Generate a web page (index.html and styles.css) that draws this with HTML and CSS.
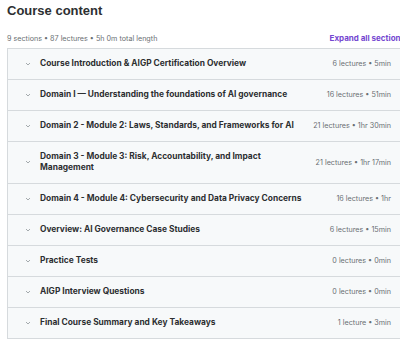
FILE: index.html
```html
<!DOCTYPE html>
<html lang="en">
<head>
    <meta charset="UTF-8">
    <meta name="viewport" content="width=device-width, initial-scale=1.0">
    <title>Course content</title>
    <link rel="stylesheet" href="styles.css">
</head>
<body>
    <div class="container">
        <h1>Course content</h1>
        <div class="summary">
            <span>9 sections • 87 lectures • 5h 0m total length</span>
            <button class="expand-btn">Expand all sections</button>
        </div>
        <div class="sections">
            <div class="section">
                <svg class="chevron" viewBox="0 0 6 4"><polyline points="1,1 3,3 5,1"/></svg>
                <span class="section-title">Course Introduction &amp; AIGP Certification Overview</span>
                <span class="section-meta">6 lectures • 5min</span>
            </div>
            <div class="section">
                <svg class="chevron" viewBox="0 0 6 4"><polyline points="1,1 3,3 5,1"/></svg>
                <span class="section-title">Domain I — Understanding the foundations of AI governance</span>
                <span class="section-meta">16 lectures • 51min</span>
            </div>
            <div class="section">
                <svg class="chevron" viewBox="0 0 6 4"><polyline points="1,1 3,3 5,1"/></svg>
                <span class="section-title">Domain 2 - Module 2: Laws, Standards, and Frameworks for AI</span>
                <span class="section-meta">21 lectures • 1hr 30min</span>
            </div>
            <div class="section">
                <svg class="chevron" viewBox="0 0 6 4"><polyline points="1,1 3,3 5,1"/></svg>
                <span class="section-title narrow">Domain 3 - Module 3: Risk, Accountability, and Impact Management</span>
                <span class="section-meta">21 lectures • 1hr 17min</span>
            </div>
            <div class="section">
                <svg class="chevron" viewBox="0 0 6 4"><polyline points="1,1 3,3 5,1"/></svg>
                <span class="section-title">Domain 4 - Module 4: Cybersecurity and Data Privacy Concerns</span>
                <span class="section-meta">16 lectures • 1hr</span>
            </div>
            <div class="section">
                <svg class="chevron" viewBox="0 0 6 4"><polyline points="1,1 3,3 5,1"/></svg>
                <span class="section-title">Overview: AI Governance Case Studies</span>
                <span class="section-meta">6 lectures • 15min</span>
            </div>
            <div class="section">
                <svg class="chevron" viewBox="0 0 6 4"><polyline points="1,1 3,3 5,1"/></svg>
                <span class="section-title">Practice Tests</span>
                <span class="section-meta">0 lectures • 0min</span>
            </div>
            <div class="section">
                <svg class="chevron" viewBox="0 0 6 4"><polyline points="1,1 3,3 5,1"/></svg>
                <span class="section-title">AIGP Interview Questions</span>
                <span class="section-meta">0 lectures • 0min</span>
            </div>
            <div class="section">
                <svg class="chevron" viewBox="0 0 6 4"><polyline points="1,1 3,3 5,1"/></svg>
                <span class="section-title">Final Course Summary and Key Takeaways</span>
                <span class="section-meta">1 lecture • 3min</span>
            </div>
        </div>
    </div>
</body>
</html>
```

FILE: styles.css
```css
:root {
    --text-color: #2d2f31;
    --muted-color: #6a6f73;
    --border-color: #d6dadd;
    --row-bg: #f7f9fa;
    --accent-color: #7446d0;
}
html, body {
    overflow: hidden;
}
body {
    font-family: Inter, "Noto Sans", sans-serif;
    margin: 0;
    padding: 0;
    background: #fff;
    color: var(--text-color);
}
.container {
    width: 398px;
    padding: 2px 0 0 7px;
}
h1 {
    font-family: "Liberation Sans", Arial, sans-serif;
    font-size: 13px;
    line-height: 17px;
    margin: 0;
    font-weight: 700;
}
.summary {
    display: flex;
    justify-content: space-between;
    align-items: center;
    margin-top: 13px;
    height: 12px;
    font-size: 7.2px;
    color: var(--muted-color);
}
.expand-btn {
    background: none;
    border: none;
    padding: 0;
    font-family: inherit;
    font-size: 8px;
    font-weight: 700;
    color: var(--accent-color);
    white-space: nowrap;
}
.sections {
    margin-top: 4px;
    border: 1px solid var(--border-color);
    border-right: none;
}
.section {
    display: flex;
    align-items: center;
    min-height: 31px;
    padding: 9px 14px 10px 17px;
    box-sizing: border-box;
    background: var(--row-bg);
    border-bottom: 1px solid var(--border-color);
}
.section:last-child {
    border-bottom: none;
    min-height: 30px;
}
.chevron {
    width: 6px;
    height: 4px;
    margin: 0 9px 0 0;
    flex-shrink: 0;
    fill: none;
    stroke: #9aa0a4;
    stroke-width: 0.9;
}
.section-title {
    flex: 1;
    font-size: 8.4px;
    font-weight: 700;
    line-height: 11px;
    padding-right: 8px;
}
.section-title.narrow {
    padding-right: 40px;
}
.section-meta {
    flex-shrink: 0;
    font-size: 7.2px;
    color: var(--muted-color);
    white-space: nowrap;
}
```
